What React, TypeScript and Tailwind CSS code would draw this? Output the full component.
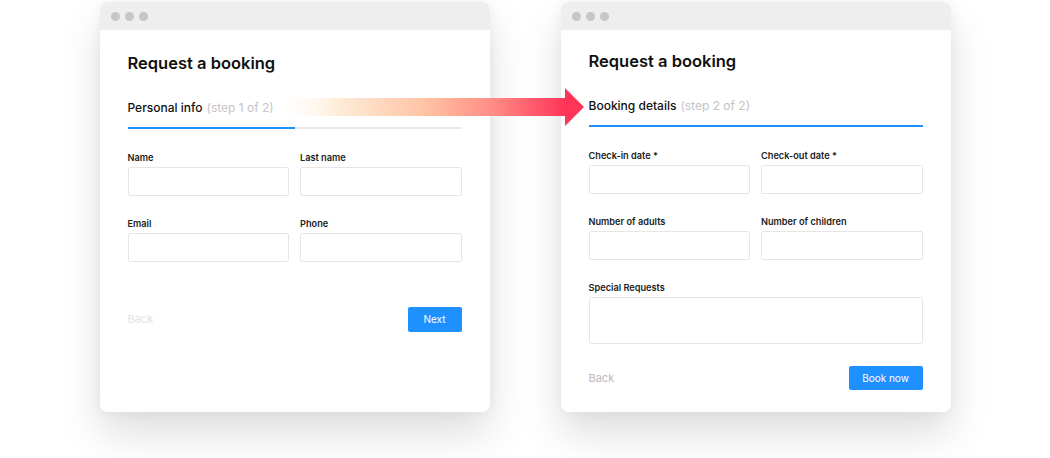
import React from "react";

const font = { fontFamily: "Inter, 'Noto Sans', sans-serif" };

function Field({ label, tall }: { label: string; tall?: boolean }) {
  return (
    <div className={tall ? "col-span-2" : ""}>
      <div className="text-[9.2px] leading-[12px] font-semibold text-[#222] mb-[3px]">{label}</div>
      <div className={`${tall ? "h-[47px]" : "h-[29px]"} border border-[#e6e6e6] rounded-[2px] bg-white`} />
    </div>
  );
}

function Window({ children, top }: { children: React.ReactNode; top: string }) {
  return (
    <div className="w-[390px] h-[410px] bg-white rounded-[8px] overflow-hidden shadow-[0_22px_40px_rgba(0,0,0,0.13),0_0_14px_rgba(0,0,0,0.05)] flex flex-col">
      <div className="h-[28px] bg-[#eeeeee] flex items-center gap-[5px] pl-[11px]">
        <span className="w-[9px] h-[9px] rounded-full bg-[#c6c6c6]" />
        <span className="w-[9px] h-[9px] rounded-full bg-[#c6c6c6]" />
        <span className="w-[9px] h-[9px] rounded-full bg-[#c6c6c6]" />
      </div>
      <div className={`px-[28px] ${top}`}>{children}</div>
    </div>
  );
}

function Header({ title, step, full }: { title: string; step: string; full?: boolean }) {
  return (
    <>
      <h1 className="text-[16.5px] leading-[24px] font-semibold text-[#111]">Request a booking</h1>
      <div className="mt-[24px] text-[12px] leading-[18px] flex gap-[4px]">
        <span className="font-medium text-[#111]">{title}</span>
        <span className="text-[#c4c4c4]">{step}</span>
      </div>
      <div className="mt-[10px] h-[2px] bg-[#ebebeb] flex">
        <div className={`${full ? "w-full" : "w-1/2"} h-full bg-[#1e90ff]`} />
      </div>
    </>
  );
}

export default function App() {
  return (
    <div className="relative w-[1050px] h-[458px] bg-white overflow-hidden" style={font}>
      <div className="flex justify-center gap-[71px] pt-[2px]">
        <Window top="pt-[21px]">
          <Header title="Personal info" step="(step 1 of 2)" />
          <div className="mt-[23px] grid grid-cols-2 gap-x-[11px] gap-y-[22px]">
            <Field label="Name" />
            <Field label="Last name" />
            <Field label="Email" />
            <Field label="Phone" />
          </div>
          <div className="mt-[45px] flex items-center justify-between">
            <span className="text-[11px] text-[#e2e2e2]">Back</span>
            <button className="w-[54px] h-[25px] rounded-[2px] bg-[#1e90ff] text-white text-[10px]">Next</button>
          </div>
        </Window>
        <Window top="pt-[19px]">
          <Header title="Booking details" step="(step 2 of 2)" full />
          <div className="mt-[23px] grid grid-cols-2 gap-x-[11px] gap-y-[22px]">
            <Field label="Check-in date *" />
            <Field label="Check-out date *" />
            <Field label="Number of adults" />
            <Field label="Number of children" />
            <Field label="Special Requests" tall />
          </div>
          <div className="mt-[22px] flex items-center justify-between">
            <span className="text-[11px] text-[#bababa]">Back</span>
            <button className="w-[74px] h-[24px] rounded-[2px] bg-[#1e90ff] text-white text-[10px]">Book now</button>
          </div>
        </Window>
      </div>

      {/* transition arrow */}
      <svg className="absolute left-[280px] top-[85px]" width="310" height="45" viewBox="0 0 310 45">
        <defs>
          <linearGradient id="arrowFade" x1="5" y1="0" x2="285" y2="0" gradientUnits="userSpaceOnUse">
            <stop offset="0" stopColor="#fff6e8" stopOpacity="0" />
            <stop offset="0.2" stopColor="#fdebd6" />
            <stop offset="0.5" stopColor="#ffc3a4" />
            <stop offset="0.75" stopColor="#ff8a84" />
            <stop offset="1" stopColor="#ff3459" />
          </linearGradient>
        </defs>
        <rect x="5" y="13" width="281" height="18" fill="url(#arrowFade)" />
        <polygon points="285,3 304,22 285,41" fill="#ff3459" />
      </svg>
    </div>
  );
}
